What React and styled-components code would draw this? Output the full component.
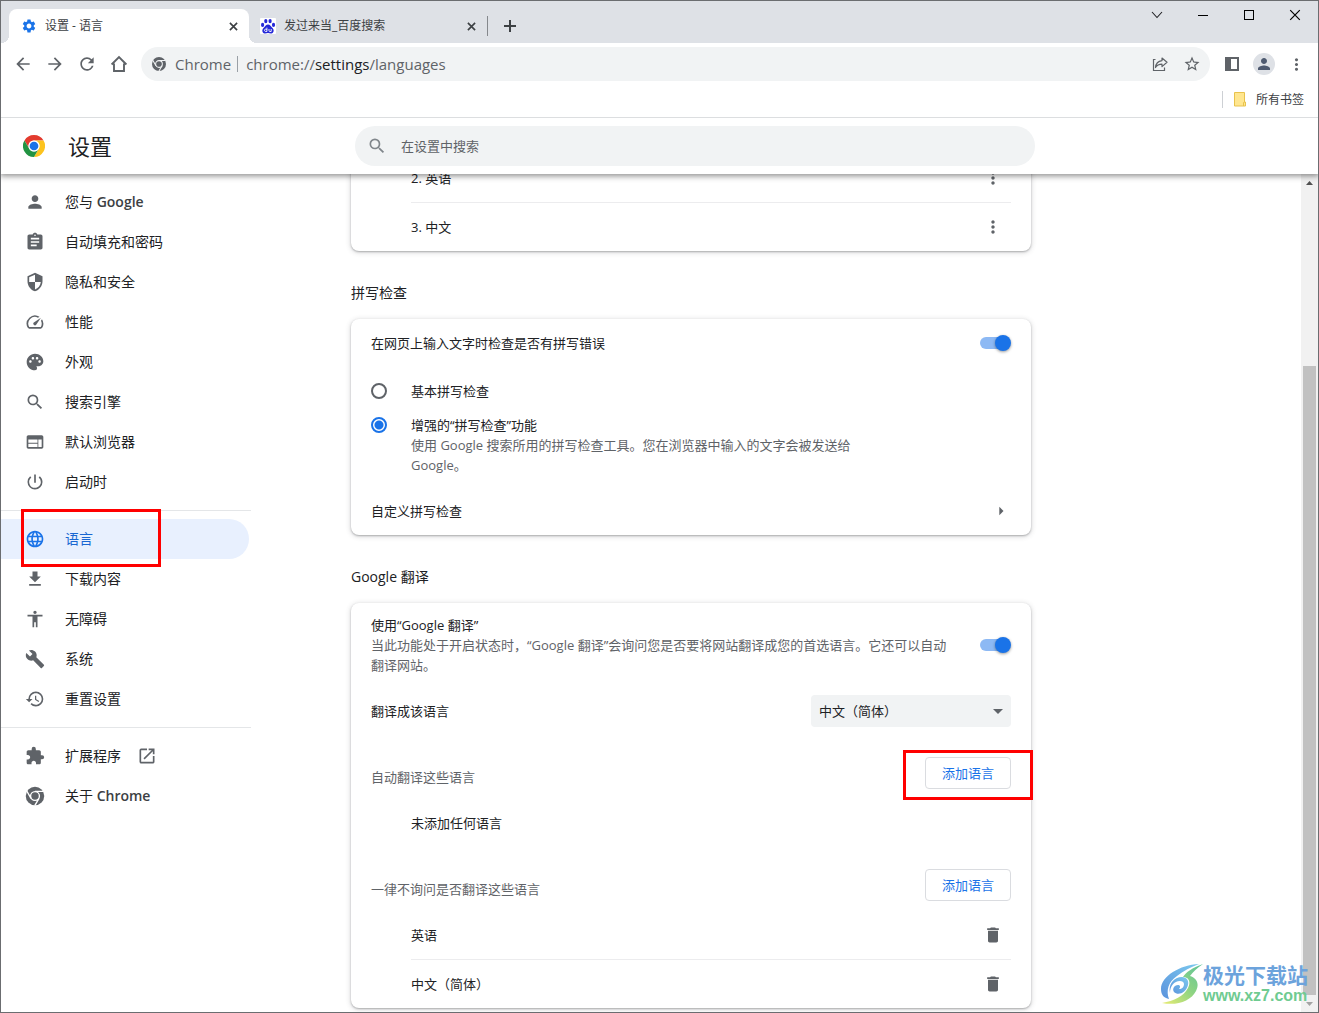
import React from "react";
import styled, { createGlobalStyle, css } from "styled-components";
import {
  MdPerson, MdAssignment, MdSecurity, MdSpeed, MdPalette, MdSearch, MdWeb,
  MdPowerSettingsNew, MdLanguage, MdFileDownload, MdAccessibility, MdBuild,
  MdRestore, MdExtension, MdOpenInNew, MdSettings, MdArrowBack, MdArrowForward,
  MdRefresh, MdStarBorder, MdMoreVert, MdDelete, MdArrowRight, MdArrowDropDown,
} from "react-icons/md";

const GlobalStyle = createGlobalStyle`
  *, *::before, *::after { box-sizing: border-box; }
  body { margin: 0; background: #fff; }
  body, button, input, select {
    font-family: "Open Sans", "Noto Sans CJK SC", sans-serif;
  }
  button { border: 0; padding: 0; background: none; color: inherit; cursor: pointer; }
  h1, h2, h3, p, ul { margin: 0; padding: 0; font-weight: 400; list-style: none; }
  svg { display: block; flex: none; }
`;

/* ---------- window frame ---------- */

const Window = styled.div`
  position: relative;
  display: flex;
  flex-direction: column;
  height: 100vh;
  overflow: hidden;
  border: 1px solid #6b6d70;
  background: #fff;
  color: #202124;
  font-size: 13px;
  line-height: 20px;
`;

const TabStrip = styled.div`
  display: flex;
  align-items: flex-end;
  height: 42px;
  flex: none;
  padding-left: 8px;
  background: #dee1e6;
`;

const Tab = styled.div`
  position: relative;
  display: flex;
  align-items: center;
  gap: 8px;
  width: ${(p) => (p.$active ? 240 : 238)}px;
  height: 34px;
  padding: 0 8px 0 ${(p) => (p.$active ? 12 : 11)}px;
  font-size: 12px;
  color: #3c4043;
  ${(p) =>
    p.$active &&
    css`
      background: #fff;
      border-radius: 8px 8px 0 0;
      &::before,
      &::after {
        content: "";
        position: absolute;
        bottom: 0;
        width: 8px;
        height: 8px;
      }
      &::before {
        left: -8px;
        background: radial-gradient(circle at 0 0, transparent 8px, #fff 8px);
      }
      &::after {
        right: -8px;
        background: radial-gradient(circle at 100% 0, transparent 8px, #fff 8px);
      }
    `}
`;

const TabLabel = styled.button`
  flex: 1;
  text-align: left;
  font-size: 12px;
  line-height: 20px;
  white-space: nowrap;
  overflow: hidden;
`;

const TabClose = styled.button`
  display: grid;
  place-items: center;
  width: 16px;
  height: 16px;
`;

const NewTab = styled.button`
  display: grid;
  place-items: center;
  width: 28px;
  height: 28px;
  margin: 0 0 3px 8px;
`;

const TabDivider = styled.span`
  width: 1px;
  height: 20px;
  margin-bottom: 7px;
  background: #85888c;
`;

const Caption = styled.div`
  display: flex;
  align-self: flex-start;
  margin-left: auto;
`;

const CaptionButton = styled.button`
  display: grid;
  place-items: center;
  width: 46px;
  height: 28px;
`;

/* ---------- toolbar ---------- */

const Toolbar = styled.div`
  display: flex;
  align-items: center;
  height: 42px;
  flex: none;
  padding: 0 6px;
  color: #5f6368;
`;

const ToolButton = styled.button`
  display: grid;
  place-items: center;
  width: 32px;
  height: 32px;
`;

const AddressBar = styled.div`
  display: flex;
  align-items: center;
  flex: 1;
  height: 34px;
  margin: 0 6px;
  padding: 0 2px 0 11px;
  border-radius: 17px;
  background: #f1f3f4;
  font-size: 15px;
`;

const SiteChip = styled.span`
  display: flex;
  align-items: center;
  gap: 9px;
`;

const ChipDivider = styled.span`
  width: 1px;
  height: 16px;
  margin: 0 8px 0 6px;
  background: #9aa0a6;
`;

const Url = styled.span`
  flex: 1;
  white-space: nowrap;
  b { font-weight: 400; color: #202124; }
`;

const Avatar = styled.span`
  display: grid;
  place-items: center;
  width: 22px;
  height: 22px;
  border-radius: 50%;
  background: #dee1e6;
  color: #4e5a70;
`;

const BookmarkBar = styled.div`
  display: flex;
  align-items: center;
  justify-content: flex-end;
  height: 33px;
  flex: none;
  padding: 0 14px 4px 0;
  border-bottom: 1px solid #dcdee0;
`;

const BookmarkFolder = styled.button`
  display: flex;
  align-items: center;
  gap: 10px;
  padding-left: 11px;
  border-left: 1px solid #cdd0d4;
  font-size: 12px;
  line-height: 17px;
  color: #3c4043;
`;

/* ---------- settings header ---------- */

const Header = styled.header`
  position: relative;
  z-index: 2;
  display: flex;
  align-items: center;
  height: 56px;
  flex: none;
  background: #fff;
  box-shadow: 0 1px 6px 1px rgba(0, 0, 0, 0.45);
  clip-path: inset(0 0 -12px 0);
`;

const Brand = styled.div`
  display: flex;
  align-items: center;
  gap: 23px;
  width: 354px;
  padding-left: 22px;
`;

const Title = styled.h1`
  font-size: 22px;
  line-height: 32px;
`;

const SearchBox = styled.label`
  display: flex;
  align-items: center;
  gap: 14px;
  flex: 1;
  max-width: 680px;
  height: 40px;
  padding: 0 12px;
  border-radius: 20px;
  background: #f1f3f4;
  color: #80868b;
`;

const SearchInput = styled.input`
  flex: 1;
  border: 0;
  padding: 0;
  outline: 0;
  background: none;
  font-size: 13px;
  line-height: 20px;
  color: #202124;
  &::placeholder { color: #5f6368; opacity: 1; }
`;

/* ---------- body ---------- */

const Body = styled.div`
  display: flex;
  flex: 1;
  min-height: 0;
`;

const Sidebar = styled.nav`
  width: 250px;
  flex: none;
  padding-top: 8px;
`;

const NavItem = styled.a`
  position: relative;
  display: flex;
  align-items: center;
  gap: 20px;
  height: 40px;
  margin-right: 2px;
  padding-left: 24px;
  border-radius: 0 20px 20px 0;
  font-size: 14px;
  text-decoration: none;
  color: ${(p) => (p.$active ? "#1967d2" : "#202124")};
  background: ${(p) => (p.$active ? "#e8f0fe" : "none")};
  svg { color: ${(p) => (p.$active ? "#1a73e8" : "#5f6368")}; }
`;

const NavLabel = styled.span`
  display: flex;
  align-items: center;
  gap: 16px;
  b { font-weight: 600; color: #3c4043; }
`;

const NavRule = styled.hr`
  height: 1px;
  margin: 8px 0;
  border: 0;
  background: #e4e6e8;
`;

/* Red frame drawn round an element that the guide points out. */
const Callout = styled.span`
  position: absolute;
  z-index: 1;
  inset: ${(p) => p.$inset};
  border: 3px solid #f00;
  pointer-events: none;
`;

const Main = styled.main`
  flex: 1;
  min-width: 0;
  padding: 0 20px 0 100px;
  overflow: hidden;
`;

/* Already scrolled: the top of the first card is under the header. */
const Scrolled = styled.div`
  max-width: 680px;
  margin-top: -20px;
`;

const SectionTitle = styled.h2`
  padding: 32px 0 16px;
  font-size: 14px;
  line-height: 20px;
`;

const Card = styled.section`
  border-radius: 8px;
  background: #fff;
  box-shadow: 0 1px 2px rgba(60, 64, 67, 0.35), 0 1px 5px 1px rgba(60, 64, 67, 0.16);
`;

const Row = styled.div`
  display: flex;
  align-items: center;
  justify-content: space-between;
  gap: 24px;
  min-height: 48px;
  padding: ${(p) => (p.$tall ? 12 : 0)}px 20px;
`;

const RowText = styled.label`
  flex: 1;
`;

const Muted = styled.p`
  max-width: ${(p) => p.$max || "none"};
  color: #5f6368;
`;

const List = styled.ul`
  padding: 0 20px 0 60px;
`;

const ListItem = styled.li`
  display: flex;
  align-items: center;
  justify-content: space-between;
  height: 49px;
  border-bottom: 1px solid #ececee;
  &:last-child { height: 48px; border: 0; }
`;

const IconButton = styled.button`
  display: grid;
  place-items: center;
  width: 36px;
  height: 36px;
  color: #5f6368;
`;

const Toggle = styled.input`
  appearance: none;
  position: relative;
  width: 30px;
  height: 12px;
  flex: none;
  margin: 0 1px 0 0;
  border-radius: 6px;
  background: #8db9f4;
  &::after {
    content: "";
    position: absolute;
    top: -2px;
    right: -1px;
    width: 16px;
    height: 16px;
    border-radius: 50%;
    background: #1a73e8;
    box-shadow: 0 1px 3px rgba(0, 0, 0, 0.4);
  }
`;

const RadioGroup = styled.div`
  display: flex;
  flex-direction: column;
  gap: 14px;
  padding: 14px 20px 12px;
`;

const RadioRow = styled.label`
  display: flex;
  align-items: flex-start;
  gap: 24px;
`;

const Radio = styled.input`
  appearance: none;
  width: 16px;
  height: 16px;
  flex: none;
  margin: 2px 0;
  border: 2px solid #5f6368;
  border-radius: 50%;
  &:checked {
    border-color: #1a73e8;
    background: radial-gradient(circle, #1a73e8 4px, #fff 5px);
  }
`;

const LinkRow = styled.button`
  display: flex;
  align-items: center;
  justify-content: space-between;
  width: 100%;
  height: 48px;
  padding: 0 20px;
  font-size: 13px;
  line-height: 20px;
  text-align: left;
  svg { color: #5f6368; }
`;

const SelectWrap = styled.span`
  display: grid;
  align-items: center;
  width: 200px;
  > * { grid-area: 1 / 1; }
  svg { justify-self: end; margin-right: 1px; color: #5f6368; pointer-events: none; }
`;

const Select = styled.select`
  appearance: none;
  width: 100%;
  height: 32px;
  padding: 0 8px;
  border: 0;
  border-radius: 4px;
  background: #f1f3f4;
  font-size: 13px;
  color: #202124;
`;

const ListHead = styled.div`
  display: flex;
  align-items: center;
  justify-content: space-between;
  padding: 22px 20px 10px;
`;

const ListTitle = styled.h3`
  padding-top: 8px;
  font-size: 13px;
  line-height: 20px;
  color: #5f6368;
`;

const ButtonAnchor = styled.span`
  position: relative;
`;

const OutlineButton = styled.button`
  display: block;
  width: 86px;
  height: 32px;
  border: 1px solid #dadce0;
  border-radius: 4px;
  font-size: 13px;
  line-height: 20px;
  color: #1a73e8;
`;

const Empty = styled.p`
  padding: 14px 20px 14px 60px;
`;

/* ---------- scroll bar ---------- */

const ScrollBar = styled.div`
  display: flex;
  flex-direction: column;
  width: 17px;
  flex: none;
  background: #f1f1f1;
`;

const ScrollArrow = styled.span`
  display: grid;
  place-items: center;
  height: 17px;
`;

const ScrollGap = styled.span`
  flex: 175;
`;

const ScrollThumb = styled.span`
  flex: 629;
  margin: 0 2px;
  background: #c1c1c1;
`;

/* ---------- site mark ---------- */

const SiteMark = styled.div`
  position: absolute;
  z-index: 3;
  right: 10px;
  bottom: 7px;
  display: flex;
  align-items: center;
  pointer-events: none;
`;

const SiteName = styled.div`
  font-size: 21px;
  line-height: 24px;
  font-weight: 700;
  color: #6ca3dc;
`;

const SiteUrl = styled.div`
  font-family: "Liberation Sans", sans-serif;
  font-size: 16px;
  line-height: 18px;
  font-weight: 700;
  color: #6fcb91;
`;

/* ---------- drawings ---------- */

const RED = "M24 12H44.785A24 24 0 0 0 3.215 12L13.608 30A12 12 0 0 1 24 12Z";
const YELLOW = "M34.392 30L24 48A24 24 0 0 0 44.785 12H24A12 12 0 0 1 34.392 30Z";
const GREEN = "M13.608 30L3.215 12A24 24 0 0 0 24 48L34.392 30A12 12 0 0 1 13.608 30Z";

const ChromeLogo = ({ size }) => (
  <svg width={size} height={size} viewBox="0 0 48 48" aria-hidden="true">
    <path d={RED} fill="#e33b2e" />
    <path d={YELLOW} fill="#fcc31e" />
    <path d={GREEN} fill="#229342" />
    <circle cx="24" cy="24" r="12" fill="#fff" />
    <circle cx="24" cy="24" r="9.5" fill="#1a73e8" />
  </svg>
);

const ChromeMono = ({ size, gap = "#fff", viewBox = "-2 -2 52 52" }) => (
  <svg width={size} height={size} viewBox={viewBox} aria-hidden="true">
    <circle cx="24" cy="24" r="24" fill="#5f6368" />
    <g fill="none" stroke={gap} strokeWidth="3.6">
      <circle cx="24" cy="24" r="11.5" />
      <path d="M24 12H46M13.608 30L2.6 11M34.392 30L23.4 49" />
    </g>
  </svg>
);

const Paw = () => (
  <svg width="16" height="16" viewBox="0 0 16 16" aria-hidden="true">
    <rect width="16" height="16" rx="1" fill="#fff" />
    <g fill="#2529d8">
      <ellipse cx="2.6" cy="6.9" rx="1.6" ry="2.1" />
      <ellipse cx="5.8" cy="3.1" rx="1.6" ry="2.2" />
      <ellipse cx="10.1" cy="3.1" rx="1.6" ry="2.2" />
      <ellipse cx="13.5" cy="6.9" rx="1.6" ry="2.1" />
      <path d="M8 6.6c2 0 2.6 1.8 4.2 3.1 2.4 1.9 1.6 5.6-.8 5.7-1.4.1-2.2-.3-3.4-.3s-2 .4-3.4.3c-2.4-.1-3.200-3.800-.8-5.700C5.400 8.400 6 6.600 8 6.600z" />
    </g>
    <path d="M6.900 9.600v3.900H5.500a1.200 1.200 0 1 1 1.400-1.400M9 11v1.600c0 .6.300.9.900.9h1.300V11" fill="none" stroke="#fff" strokeWidth=".9" />
  </svg>
);

const Cross = ({ size, width, color }) => (
  <svg width={size} height={size} viewBox="0 0 10 10" aria-hidden="true">
    <path d="M1 1l8 8M9 1l-8 8" stroke={color} strokeWidth={width} fill="none" />
  </svg>
);

const Home = () => (
  <svg width="20" height="20" viewBox="0 0 20 20" aria-hidden="true">
    <path d="M2.600 10.500L10 3l7.400 7.500M5 9.500V17h10V9.500" fill="none" stroke="currentColor" strokeWidth="1.900" />
  </svg>
);

const Share = () => (
  <svg width="18" height="18" viewBox="0 0 18 18" fill="none" stroke="currentColor" strokeWidth="1.200" aria-hidden="true">
    <path d="M4.500 4.500H2.500v11h11v-3" />
    <path d="M11 3l5 4.300-5 4.300V9.200c-3 0-5 .8-6.500 3.300.3-3.800 2.500-6.300 6.500-6.900z" strokeLinejoin="round" />
  </svg>
);

const SidePanel = () => (
  <svg width="14" height="14" viewBox="0 0 14 14" aria-hidden="true">
    <rect x="1" y="1" width="12" height="12" fill="none" stroke="currentColor" strokeWidth="2" />
    <rect width="6" height="14" fill="currentColor" />
  </svg>
);

const Folder = () => (
  <svg width="12" height="15" viewBox="0 0 12 15" aria-hidden="true">
    <path d="M.5.500h10v9.500h1v4H.500z" fill="#ffe68f" stroke="#e8c24c" />
    <path d="M9.500 14v-3.500h1" fill="none" stroke="#e8c24c" />
  </svg>
);

const Triangle = ({ down }) => (
  <svg width="7" height="4" viewBox="0 0 7 4" aria-hidden="true">
    <path d={down ? "M0 0h7L3.500 4z" : "M0 4h7L3.500 0z"} fill={down ? "#a3a3a3" : "#505050"} />
  </svg>
);

const Swirl = () => (
  <svg width="43" height="42" viewBox="0 0 43 42" aria-hidden="true">
    <defs>
      <linearGradient id="sky" x1="0" y1="1" x2="1" y2="0">
        <stop offset="0" stopColor="#5b93dd" />
        <stop offset="1" stopColor="#7cc9ee" />
      </linearGradient>
      <linearGradient id="leaf" x1="0" y1="1" x2="1" y2="0">
        <stop offset="0" stopColor="#e9ec72" />
        <stop offset=".5" stopColor="#8fd482" />
        <stop offset="1" stopColor="#5cc29a" />
      </linearGradient>
    </defs>
    <path d="M39 1C20 2 1 13 1 26c0 6 3 9 8 10-3-8-1-17 8-23C23 8 31 4 39 1z" fill="url(#sky)" />
    <path d="M10 30C8 21 14 14 22 14c5 0 7 4 6 8-2 8-10 11-14 7-2-3 0-7 4-7 2 0 3 2 1 4 3 0 5-2 5-5 0-2-2-3-4-3-6 0-10 5-10 12z" fill="url(#sky)" />
    <path d="M43 1C32 5 26 9 23 14c6 0 8 5 5 11-4 8-14 13-26 15 15 3 29-2 34-12 4-8 0-13-6-15C33 9 37 5 43 1z" fill="url(#leaf)" />
  </svg>
);

/* ---------- content ---------- */

const NAV = [
  [
    [MdPerson, "您与 ", { latin: "Google" }],
    [MdAssignment, "自动填充和密码"],
    [MdSecurity, "隐私和安全"],
    [MdSpeed, "性能"],
    [MdPalette, "外观"],
    [MdSearch, "搜索引擎"],
    [MdWeb, "默认浏览器"],
    [MdPowerSettingsNew, "启动时"],
  ],
  [
    [MdLanguage, "语言", { active: true }],
    [MdFileDownload, "下载内容"],
    [MdAccessibility, "无障碍"],
    [MdBuild, "系统"],
    [MdRestore, "重置设置"],
  ],
  [
    [MdExtension, "扩展程序", { external: true }],
    [ChromeMono, "关于 ", { latin: "Chrome" }],
  ],
];

const AddLanguage = ({ marked }) => (
  <ButtonAnchor>
    <OutlineButton type="button">添加语言</OutlineButton>
    {marked && <Callout $inset="-7px -22px -11px -22px" />}
  </ButtonAnchor>
);

export default function App() {
  return (
    <Window lang="zh-CN">
      <GlobalStyle />
      <TabStrip>
        <Tab $active>
          <MdSettings size={16} color="#1a73e8" />
          <TabLabel type="button">设置 - 语言</TabLabel>
          <TabClose type="button" aria-label="关闭">
            <Cross size={9} width="1.8" color="#3c4043" />
          </TabClose>
        </Tab>
        <Tab>
          <Paw />
          <TabLabel type="button">发过来当_百度搜索</TabLabel>
          <TabClose type="button" aria-label="关闭">
            <Cross size={9} width="1.8" color="#3c4043" />
          </TabClose>
        </Tab>
        <TabDivider />
        <NewTab type="button" aria-label="新标签页">
          <svg width="12" height="12" viewBox="0 0 12 12" aria-hidden="true">
            <path d="M6 0v12M0 6h12" stroke="#3c4043" strokeWidth="2" />
          </svg>
        </NewTab>
        <Caption>
          <CaptionButton type="button" aria-label="搜索标签页">
            <svg width="12" height="8" viewBox="0 0 12 8" aria-hidden="true">
              <path d="M1 1l5 5.500L11 1" fill="none" stroke="#202124" strokeWidth="1.100" />
            </svg>
          </CaptionButton>
          <CaptionButton type="button" aria-label="最小化">
            <svg width="10" height="2" viewBox="0 0 10 2" aria-hidden="true">
              <path d="M0 1.500h10" stroke="#000" />
            </svg>
          </CaptionButton>
          <CaptionButton type="button" aria-label="最大化">
            <svg width="10" height="10" viewBox="0 0 10 10" aria-hidden="true">
              <rect x=".5" y=".5" width="9" height="9" fill="none" stroke="#000" />
            </svg>
          </CaptionButton>
          <CaptionButton type="button" aria-label="关闭窗口">
            <Cross size={12} width="1" color="#000" />
          </CaptionButton>
        </Caption>
      </TabStrip>

      <Toolbar>
        <ToolButton type="button" aria-label="后退"><MdArrowBack size={20} /></ToolButton>
        <ToolButton type="button" aria-label="前进"><MdArrowForward size={20} /></ToolButton>
        <ToolButton type="button" aria-label="重新加载"><MdRefresh size={20} /></ToolButton>
        <ToolButton type="button" aria-label="主页"><Home /></ToolButton>
        <AddressBar>
          <SiteChip>
            <ChromeMono size={14} gap="#f1f3f4" viewBox="0 0 48 48" />
            Chrome
          </SiteChip>
          <ChipDivider />
          <Url>chrome://<b>settings</b>/languages</Url>
          <ToolButton type="button" aria-label="分享"><Share /></ToolButton>
          <ToolButton type="button" aria-label="加入书签"><MdStarBorder size={18} /></ToolButton>
        </AddressBar>
        <ToolButton type="button" aria-label="侧边栏"><SidePanel /></ToolButton>
        <ToolButton type="button" aria-label="个人资料">
          <Avatar><MdPerson size={18} /></Avatar>
        </ToolButton>
        <ToolButton type="button" aria-label="菜单"><MdMoreVert size={19} /></ToolButton>
      </Toolbar>

      <BookmarkBar>
        <BookmarkFolder type="button"><Folder />所有书签</BookmarkFolder>
      </BookmarkBar>

      <Header>
        <Brand>
          <ChromeLogo size={22} />
          <Title>设置</Title>
        </Brand>
        <SearchBox>
          <MdSearch size={20} />
          <SearchInput type="search" placeholder="在设置中搜索" aria-label="在设置中搜索" />
        </SearchBox>
      </Header>

      <Body>
        <Sidebar>
          {NAV.map((group, g) => (
            <React.Fragment key={g}>
              {g > 0 && <NavRule />}
              {group.map(([Icon, label, opt = {}]) => (
                <NavItem key={label} href="#" $active={opt.active}>
                  <Icon size={20} />
                  <NavLabel>
                    <span>{label}{opt.latin && <b>{opt.latin}</b>}</span>
                    {opt.external && <MdOpenInNew size={20} />}
                  </NavLabel>
                  {opt.active && <Callout $inset="-10px 88px -8px 20px" />}
                </NavItem>
              ))}
            </React.Fragment>
          ))}
        </Sidebar>

        <Main>
          <Scrolled>
            <Card>
              <List>
                {["2. 英语", "3. 中文"].map((name) => (
                  <ListItem key={name}>
                    {name}
                    <IconButton type="button" aria-label="更多操作"><MdMoreVert size={20} /></IconButton>
                  </ListItem>
                ))}
              </List>
            </Card>

            <SectionTitle>拼写检查</SectionTitle>
            <Card>
              <Row>
                <RowText htmlFor="spell">在网页上输入文字时检查是否有拼写错误</RowText>
                <Toggle id="spell" type="checkbox" defaultChecked />
              </Row>
              <RadioGroup>
                <RadioRow>
                  <Radio type="radio" name="check" />
                  <span>基本拼写检查</span>
                </RadioRow>
                <RadioRow>
                  <Radio type="radio" name="check" defaultChecked />
                  <div>
                    增强的“拼写检查”功能
                    <Muted $max="460px">
                      使用 Google 搜索所用的拼写检查工具。您在浏览器中输入的文字会被发送给 Google。
                    </Muted>
                  </div>
                </RadioRow>
              </RadioGroup>
              <LinkRow type="button">
                自定义拼写检查
                <MdArrowRight size={20} />
              </LinkRow>
            </Card>

            <SectionTitle>Google 翻译</SectionTitle>
            <Card>
              <Row $tall>
                <RowText htmlFor="translate">
                  使用“Google 翻译”
                  <Muted>
                    当此功能处于开启状态时，“Google 翻译”会询问您是否要将网站翻译成您的首选语言。它还可以自动翻译网站。
                  </Muted>
                </RowText>
                <Toggle id="translate" type="checkbox" defaultChecked />
              </Row>
              <Row>
                <RowText htmlFor="target">翻译成该语言</RowText>
                <SelectWrap>
                  <Select id="target"><option>中文（简体）</option></Select>
                  <MdArrowDropDown size={24} />
                </SelectWrap>
              </Row>
              <ListHead>
                <ListTitle>自动翻译这些语言</ListTitle>
                <AddLanguage marked />
              </ListHead>
              <Empty>未添加任何语言</Empty>
              <ListHead>
                <ListTitle>一律不询问是否翻译这些语言</ListTitle>
                <AddLanguage />
              </ListHead>
              <List>
                {["英语", "中文（简体）"].map((name) => (
                  <ListItem key={name}>
                    {name}
                    <IconButton type="button" aria-label="移除"><MdDelete size={20} /></IconButton>
                  </ListItem>
                ))}
              </List>
            </Card>
          </Scrolled>
        </Main>

        <ScrollBar aria-hidden="true">
          <ScrollArrow><Triangle /></ScrollArrow>
          <ScrollGap />
          <ScrollThumb />
          <ScrollArrow><Triangle down /></ScrollArrow>
        </ScrollBar>
      </Body>

      <SiteMark>
        <Swirl />
        <div>
          <SiteName>极光下载站</SiteName>
          <SiteUrl>www.xz7.com</SiteUrl>
        </div>
      </SiteMark>
    </Window>
  );
}
